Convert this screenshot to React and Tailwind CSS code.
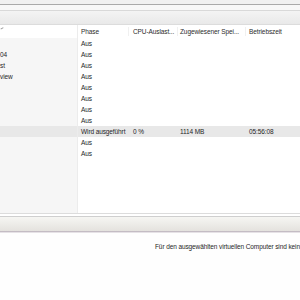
import React from 'react';

const rows = [
  { name: '', phase: 'Aus' },
  { name: '04', phase: 'Aus' },
  { name: 'st', phase: 'Aus' },
  { name: 'view', phase: 'Aus' },
  { name: '', phase: 'Aus' },
  { name: '', phase: 'Aus' },
  { name: '', phase: 'Aus' },
  { name: '', phase: 'Aus' },
  { name: '', phase: 'Wird ausgeführt', cpu: '0 %', mem: '1114 MB', up: '05:56:08', active: true },
  { name: '', phase: 'Aus' },
  { name: '', phase: 'Aus' },
];

const App = () => {
  return (
    <div className="w-[300px] h-[300px] overflow-hidden bg-white text-[6.5px] tracking-[-0.1px] text-[#1e1e1e] flex flex-col" style={{ fontFamily: '"Liberation Sans", Arial, sans-serif' }}>
      {/* top chrome */}
      <div className="h-[4px] bg-[#f0f0f0]"></div>
      <div className="h-[1px] bg-[#a9a9a9]"></div>
      <div className="h-[5px] bg-[#f7f7f7]"></div>
      <div className="h-[1px] bg-[#d9d9d9]"></div>
      <div className="h-[14px] bg-gradient-to-b from-[#f4f4f4] to-[#e9e9e9] border-b border-[#dcdcdc]"></div>

      {/* list */}
      <div className="flex flex-1 min-h-0">
        <div className="w-[78px] flex flex-col border-r border-[#ececec]">
          <div className="h-[13px] bg-white relative">
            <div className="absolute left-0 top-[1px] w-[3px] h-[3px] border-b border-[#9a9a9a] rotate-[-30deg]"></div>
          </div>
          <div className="flex-1 bg-[#f6f6f6] flex flex-col">
            {rows.map((r, i) => (
              <div key={i} className={`h-[11px] leading-[11px] ${r.active ? 'bg-[#e8e8e8]' : ''}`}>{r.name}</div>
            ))}
          </div>
        </div>
        <div className="flex-1 flex flex-col">
          <div className="h-[13px] flex items-center text-[#2b2b2b] whitespace-nowrap">
            <div className="w-[50px] pl-[3px] overflow-hidden">Phase</div>
            <div className="w-[49px] pl-[4px] border-l border-[#f0f0f0] overflow-hidden">CPU-Auslast...</div>
            <div className="w-[68px] pl-[2px] border-l border-[#f0f0f0] overflow-hidden">Zugewiesener Spei...</div>
            <div className="flex-1 pl-[3px] border-l border-[#f0f0f0] overflow-hidden">Betriebszeit</div>
          </div>
          {rows.map((r, i) => (
            <div key={i} className={`h-[11px] leading-[11px] flex whitespace-nowrap ${r.active ? 'bg-[#e8e8e8]' : ''}`}>
              <div className="w-[50px] pl-[3px]">{r.phase}</div>
              <div className="w-[49px] pl-[5px]">{r.cpu}</div>
              <div className="w-[68px] pl-[3px]">{r.mem}</div>
              <div className="flex-1 pl-[4px]">{r.up}</div>
            </div>
          ))}
        </div>
      </div>

      {/* splitter */}
      <div className="h-[1px] bg-[#dcdcdc]"></div>
      <div className="h-[2px] bg-white"></div>
      <div className="h-[1px] bg-[#cfcfcf]"></div>
      <div className="h-[14px] bg-gradient-to-b from-[#f6f6f3] to-[#e4e2de]"></div>
      <div className="h-[1px] bg-[#c4bcc4]"></div>
      <div className="h-[1px] bg-[#e6e2e6]"></div>

      {/* details */}
      <div className="h-[67px] bg-[#fefefe] pt-[9px] pl-[155px] whitespace-nowrap overflow-hidden">
        Für den ausgewählten virtuellen Computer sind keine Prüfpunkte vorhanden.
      </div>
    </div>
  );
};

export default App;
